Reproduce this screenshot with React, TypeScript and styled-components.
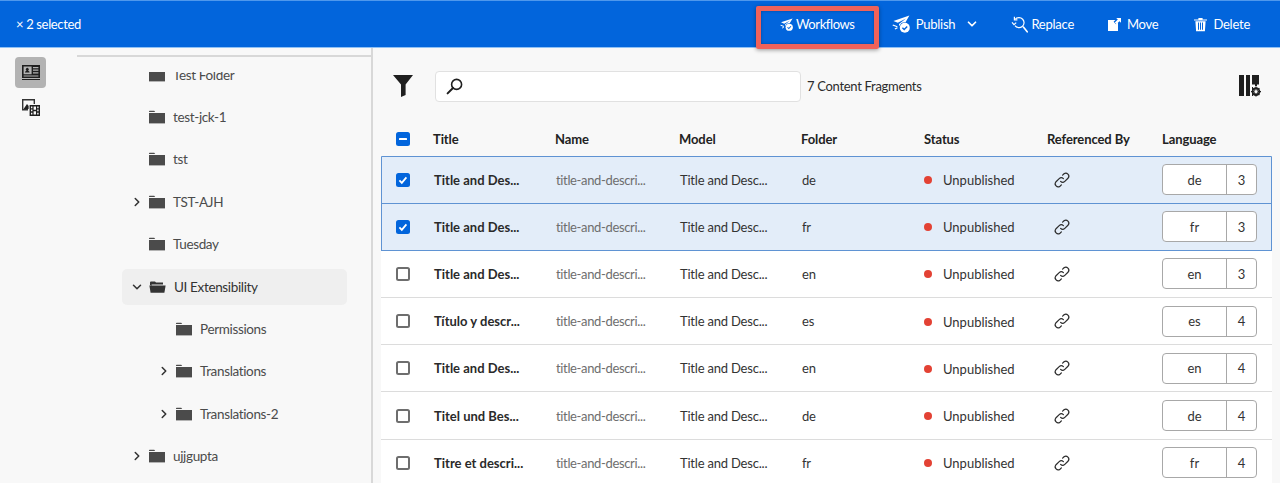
import React from "react";
import styled, { createGlobalStyle } from "styled-components";
import { ChevronDown, ChevronRight } from "lucide-react";

const FONT = `"Lato", "Noto Sans", "Liberation Sans", sans-serif`;

const GlobalStyle = createGlobalStyle`
  html, body {
    margin: 0;
    padding: 0;
    height: 483px;
    overflow: hidden;
    background: #f8f8f8;
    font-family: ${FONT};
    color: #2c2c2c;
  }
  * { box-sizing: border-box; }
`;

const Page = styled.div`
  width: 1280px;
  height: 483px;
  display: flex;
  flex-direction: column;
  overflow: hidden;
`;

/* top action bar */
const ActionBar = styled.div`
  flex: 0 0 48px;
  display: flex;
  align-items: center;
  padding: 0 30px 0 16px;
  background: #0265dc;
  border-top: 1px solid #4f98ec;
  border-bottom: 1px solid #8fc1f5;
  color: #fff;
  font-size: 13px;
  letter-spacing: -0.25px;
`;

const SelectedCount = styled.div`
  margin-right: auto;
  font-size: 13px;
  letter-spacing: -0.35px;
`;

const ActionButton = styled.div<{ $left?: number; $gap?: number }>`
  display: flex;
  align-items: center;
  gap: ${(p) => p.$gap ?? 5}px;
  margin-left: ${(p) => p.$left ?? 0}px;
  white-space: nowrap;
`;

const WorkflowsButton = styled(ActionButton)`
  position: relative;
  width: 123px;
  height: 46px;
  justify-content: center;
  gap: 3px;
  letter-spacing: -0.4px;
`;

const Highlight = styled.div`
  position: absolute;
  inset: 5px 0 -2px 0;
  border: 5px solid #f0625a;
  border-radius: 2px;
  box-shadow: 0 1px 4px rgba(0, 0, 0, 0.4), inset 0 0 3px rgba(0, 0, 0, 0.3);
`;

const PublishCaret = styled.span`
  display: flex;
  margin-left: 4px;
`;

const Body = styled.div`
  flex: 1;
  display: flex;
  min-height: 0;
`;

/* icon rail */
const Rail = styled.div`
  flex: 0 0 77px;
  display: flex;
  flex-direction: column;
  align-items: flex-start;
  padding: 9px 0 0 15px;
  gap: 3px;
`;

const RailButton = styled.div<{ $active?: boolean }>`
  width: 31px;
  height: 31px;
  display: flex;
  align-items: center;
  justify-content: center;
  border-radius: 4px;
  background: ${(p) => (p.$active ? "#b3b3b3" : "transparent")};
`;

/* folder tree */
const TreePane = styled.div`
  flex: 0 0 296px;
  display: flex;
  flex-direction: column;
  border-right: 2px solid #d8d8d8;
  padding-top: 7px;
`;

const TreeRule = styled.div`
  flex: 0 0 2px;
  background: #d8d8d8;
  margin-bottom: 15px;
`;

const TreeViewport = styled.div`
  flex: 1;
  min-height: 0;
  overflow: hidden;
`;

const TreeList = styled.div`
  margin-top: -18.5px;
  display: flex;
  flex-direction: column;
`;

const TreeRow = styled.div<{ $level: number; $open?: boolean }>`
  position: relative;
  height: 42.4px;
  display: flex;
  align-items: center;
  margin: ${(p) => (p.$open ? "0 24px 0 45px" : "0")};
  padding-left: ${(p) => (p.$open ? 8 : 72 + p.$level * 27)}px;
  font-size: 13.5px;
  letter-spacing: -0.35px;
  color: ${(p) => (p.$open ? "#333" : "#4b4b4b")};
  ${(p) =>
    p.$open
      ? `&::before {
           content: "";
           position: absolute;
           inset: 4px 0 3px 0;
           background: #efefef;
           border-radius: 5px;
         }
         & > * { position: relative; }`
      : ""}
`;

const Chevron = styled.span<{ $open?: boolean }>`
  flex: 0 0 14px;
  width: 14px;
  height: 14px;
  display: flex;
  align-items: center;
  justify-content: center;
  margin-left: ${(p) => (p.$open ? 0 : -19)}px;
  margin-right: 5px;
  color: #333;
`;

const FolderLabel = styled.span`
  margin-left: 8px;
`;

/* content pane */
const Main = styled.div`
  flex: 1;
  min-width: 0;
  display: flex;
  flex-direction: column;
  padding: 0 8px 0 8px;
`;

const SearchRow = styled.div`
  flex: 0 0 64px;
  display: flex;
  align-items: center;
  padding: 12px 11px 0 12px;
`;

const SearchBox = styled.div`
  width: 366px;
  height: 31px;
  margin-left: 22px;
  padding-left: 10px;
  display: flex;
  align-items: center;
  background: #fff;
  border: 1px solid #e1e1e1;
  border-radius: 4px;
`;

const ResultCount = styled.div`
  margin-left: 6px;
  margin-right: auto;
  font-size: 13px;
  letter-spacing: -0.3px;
  color: #2c2c2c;
`;

const Cols = `52px 122px 124px 122px 123px 123px 115px 1fr`;

const HeaderRow = styled.div`
  flex: 0 0 44.5px;
  display: grid;
  grid-template-columns: ${Cols};
  align-items: center;
  padding-top: 9px;
  font-size: 13px;
  font-weight: 700;
  letter-spacing: -0.1px;
  color: #222;
  & > :first-child {
    padding-left: 15px;
  }
`;

const Row = styled.div<{ $selected?: boolean }>`
  flex: 0 0 47.2px;
  height: 47.2px;
  display: grid;
  grid-template-columns: ${Cols};
  align-items: center;
  font-size: 13px;
  background: ${(p) => (p.$selected ? "#e3edf9" : "#fff")};
  border-bottom: 1px solid ${(p) => (p.$selected ? "#5f93d3" : "#dcdcdc")};
  ${(p) => (p.$selected ? "box-shadow: inset 1px 0 0 #5f93d3, inset -1px 0 0 #5f93d3;" : "")}
`;

const RowFirstBorder = styled.div`
  border-top: 1px solid #5f93d3;
  margin-top: -1px;
  border-radius: 3px 3px 0 0;
`;

const CheckCell = styled.div`
  padding-left: 15px;
  display: flex;
  align-items: center;
`;

const CheckBox = styled.div<{ $on?: boolean }>`
  width: 14px;
  height: 14px;
  border-radius: 2.5px;
  display: flex;
  align-items: center;
  justify-content: center;
  background: ${(p) => (p.$on ? "#0265dc" : "#fff")};
  border: ${(p) => (p.$on ? "none" : "2px solid #6e6e6e")};
`;

const TitleCell = styled.div`
  font-weight: 700;
  color: #2a2a2a;
  padding-left: 1px;
`;

const NameCell = styled.div`
  color: #6e6e6e;
  padding-left: 1px;
  letter-spacing: -0.35px;
`;

const PlainCell = styled.div`
  color: #333;
  padding-left: 1px;
  letter-spacing: -0.2px;
`;

const StatusCell = styled.div`
  display: flex;
  align-items: center;
  gap: 11px;
  color: #333;
  padding-top: 1px;
`;

const StatusDot = styled.span`
  width: 8px;
  height: 8px;
  border-radius: 50%;
  background: #e34234;
`;

const LinkCell = styled.div`
  padding-left: 6px;
  display: flex;
  align-items: center;
`;

const LangPill = styled.div`
  width: 95px;
  height: 31px;
  display: grid;
  grid-template-columns: 63px 1fr;
  background: #fff;
  border: 1px solid #a8a8a8;
  border-radius: 4px;
  font-size: 13px;
  color: #333;
`;

const LangPart = styled.div<{ $divider?: boolean }>`
  display: flex;
  align-items: center;
  justify-content: center;
  ${(p) => (p.$divider ? "border-left: 1px solid #a8a8a8;" : "")}
`;

/* drawn icons */
const PlaneCheck = ({ size }: { size: number }) => (
  <svg width={size} height={size} viewBox="0 0 18 18" fill="#fff">
    <path d="M17.4.6 1.4 6l4.4 1.8L14 3.4 7 9l.2 2.6a6 6 0 0 1 6.2-4.2z" />
    <path d="M1 9.4l4.6 1.8-.5 1.1-4.6-1.8zM2.6 13.4l2.6-1.1.5 1-2.6 1.2z" />
    <circle cx="12.8" cy="12.8" r="5" />
    <path d="m10.4 12.8 1.8 1.8 3-3.2" fill="none" stroke="#0265dc" strokeWidth="1.4" />
  </svg>
);

const ReplaceIcon = () => (
  <svg width="17" height="17" viewBox="0 0 17 17" fill="none" stroke="#fff" strokeWidth="1.2">
    <path d="M4.4 3.2A5 5 0 1 1 4 9.6" />
    <path d="M3.4.8v3h3M1 6.4l2 2.2 2.2-2" />
    <path d="M12.4 11l3.8 4.8" strokeWidth="1.6" strokeLinecap="round" />
  </svg>
);

const MoveIcon = () => (
  <svg width="15" height="15" viewBox="0 0 15 15" fill="#fff">
    <path d="M1 3h7.4L6.6 4.8 9 7.2l2-2V14H1z" />
    <path d="M9.2 1H14v4.8l-1.6-1.6-3 3-1.6-1.6 3-3z" />
  </svg>
);

const TrashIcon = () => (
  <svg width="13" height="15" viewBox="0 0 13 15" fill="#fff">
    <path d="M0 2.4h13v1.2H0zM4.4 1h4.2v1.6H4.4z" />
    <path d="M1.4 4.2h10.2l-.7 10H2.1zM4 5.6v7.2h1V5.6zm2 0v7.2h1V5.6zm2 0v7.2h1V5.6z" fillRule="evenodd" />
  </svg>
);

const FolderIcon = ({ open }: { open?: boolean }) =>
  open ? (
    <svg width="17" height="14" viewBox="0 0 17 14" fill="#333">
      <path d="M1 2.4A1 1 0 0 1 2 1.4h4l1 1.2h7v2H2.6V6L1 5z" />
      <path d="M.4 5.6h16.2l-1.2 7.2H1.6z" />
    </svg>
  ) : (
    <svg width="16" height="14" viewBox="0 0 16 14" fill="#4b4b4b">
      <path d="M0 1.4A.6.6 0 0 1 .6.8h4.6l1 1.2H0z" />
      <path d="M0 3h16v10.4H0z" />
    </svg>
  );

const ProfileIcon = () => (
  <svg width="18" height="15" viewBox="0 0 18 15" fill="#1f1f1f">
    <path
      d="M0 0h18v13H0zM1.6 1.6v7.6h8V1.6zM11 2v1.2h5.4V2zm0 2.6v1.2h5.4V4.6zm0 2.6v1.2h5.4V7.2zM1.6 10.4v1.2h14.8v-1.2z"
      fillRule="evenodd"
    />
    <path d="M3 7.6c0-1.2 1-1.4 1.6-1.8a1.5 1.5 0 1 1 1.4 0c.6.4 1.6.6 1.6 1.8z" />
    <path d="M0 14h18v1H0z" />
  </svg>
);

const MediaIcon = () => (
  <svg width="18" height="18" viewBox="0 0 18 18" fill="#1f1f1f">
    <path d="M0 1h13v5h-1.4V2.4H1.4V11H6v1.4H0z" fill="#333" />
    <path d="M1.6 11 5 6 6.6 8v3z" />
    <path
      d="M7.6 7h10.4v11H7.6zM9 8.6v1.6h1.4V8.6zm6.2 0v1.6h1.4V8.6zM9 11.6v1.6h1.4v-1.6zm6.2 0v1.6h1.4v-1.6zM9 14.8v1.6h1.4v-1.6zm6.2 0v1.6h1.4v-1.6zM11.6 8.6v3.2h2.4V8.6zm0 4.6v3.2h2.4v-3.2z"
      fillRule="evenodd"
    />
  </svg>
);

const FilterIcon = () => (
  <svg width="20" height="22" viewBox="0 0 20 22" fill="#1f1f1f">
    <path d="M0 0h20L12.6 9.4v10.6L8 22V9.4z" />
  </svg>
);

const SearchIcon = () => (
  <svg width="17" height="17" viewBox="0 0 17 17" fill="none" stroke="#1f1f1f">
    <circle cx="10.6" cy="6.4" r="5" strokeWidth="1.6" />
    <path d="M7 10 1.6 15.4" strokeWidth="2" strokeLinecap="round" />
  </svg>
);

const ColumnsIcon = () => (
  <svg width="22" height="22" viewBox="0 0 22 22" fill="#1f1f1f">
    <path d="M0 0h5v21H0zM7 0h4v21H7zM13 0h7v9.6h-2V11h-2V9.6h-3z" />
    <path d="M13 12h1v9h-1z" />
    <circle cx="17" cy="16.6" r="3.4" fill="none" stroke="#1f1f1f" strokeWidth="1.8" />
    <path d="M17 11.6v10M12 16.6h10M13.6 13.2l6.8 6.8M20.4 13.2l-6.8 6.8" stroke="#1f1f1f" strokeWidth="1.2" />
    <circle cx="17" cy="16.6" r="1.6" fill="#f8f8f8" />
  </svg>
);

const LinkIcon = () => (
  <svg width="18" height="18" viewBox="0 0 18 18" fill="none" stroke="#2c2c2c" strokeWidth="1.2">
    <path d="M7.6 10.4a3 3 0 0 0 4.2 0l3.4-3.4a3 3 0 0 0-4.2-4.2L9.6 4.2" strokeLinecap="round" />
    <path d="M10.4 7.6a3 3 0 0 0-4.2 0L2.8 11a3 3 0 0 0 4.2 4.2l1.4-1.4" strokeLinecap="round" />
  </svg>
);

const TickMark = () => (
  <svg width="10" height="10" viewBox="0 0 10 10" fill="none" stroke="#fff" strokeWidth="1.8">
    <path d="m1.4 5.4 2.4 2.4 4.6-5.4" />
  </svg>
);

const DashMark = () => (
  <svg width="8" height="2" viewBox="0 0 8 2" fill="#fff">
    <rect width="8" height="2" rx="0.6" />
  </svg>
);

const folders: { label: string; level: number; chevron?: "right" | "down"; open?: boolean }[] = [
  { label: "Test Folder", level: 0 },
  { label: "test-jck-1", level: 0 },
  { label: "tst", level: 0 },
  { label: "TST-AJH", level: 0, chevron: "right" },
  { label: "Tuesday", level: 0 },
  { label: "UI Extensibility", level: 0, chevron: "down", open: true },
  { label: "Permissions", level: 1 },
  { label: "Translations", level: 1, chevron: "right" },
  { label: "Translations-2", level: 1, chevron: "right" },
  { label: "ujjgupta", level: 0, chevron: "right" },
];

const fragments = [
  { title: "Title and Des...", folder: "de", lang: "de", count: 3, selected: true },
  { title: "Title and Des...", folder: "fr", lang: "fr", count: 3, selected: true },
  { title: "Title and Des...", folder: "en", lang: "en", count: 3 },
  { title: "Título y descr...", folder: "es", lang: "es", count: 4 },
  { title: "Title and Des...", folder: "en", lang: "en", count: 4 },
  { title: "Titel und Bes...", folder: "de", lang: "de", count: 4 },
  { title: "Titre et descri...", folder: "fr", lang: "fr", count: 4 },
];

const App: React.FC = () => (
  <Page>
    <GlobalStyle />
    <ActionBar>
      <SelectedCount>× 2 selected</SelectedCount>
      <WorkflowsButton>
        <PlaneCheck size={13} />
        Workflows
        <Highlight />
      </WorkflowsButton>
      <ActionButton $left={13} $gap={6}>
        <PlaneCheck size={18} />
        Publish
        <PublishCaret>
          <ChevronDown size={14} strokeWidth={3} />
        </PublishCaret>
      </ActionButton>
      <ActionButton $left={32} $gap={3}>
        <ReplaceIcon />
        Replace
      </ActionButton>
      <ActionButton $left={33}>
        <MoveIcon />
        Move
      </ActionButton>
      <ActionButton $left={36} $gap={6}>
        <TrashIcon />
        Delete
      </ActionButton>
    </ActionBar>
    <Body>
      <Rail>
        <RailButton $active>
          <ProfileIcon />
        </RailButton>
        <RailButton>
          <MediaIcon />
        </RailButton>
      </Rail>
      <TreePane>
        <TreeRule />
        <TreeViewport>
          <TreeList>
            {folders.map((f) => (
              <TreeRow key={f.label} $level={f.level} $open={f.open}>
                {f.chevron && (
                  <Chevron $open={f.open}>
                    {f.chevron === "down" ? (
                      <ChevronDown size={14} strokeWidth={2.6} />
                    ) : (
                      <ChevronRight size={14} strokeWidth={2.6} />
                    )}
                  </Chevron>
                )}
                <FolderIcon open={f.open} />
                <FolderLabel>{f.label}</FolderLabel>
              </TreeRow>
            ))}
          </TreeList>
        </TreeViewport>
      </TreePane>
      <Main>
        <SearchRow>
          <FilterIcon />
          <SearchBox>
            <SearchIcon />
          </SearchBox>
          <ResultCount>7 Content Fragments</ResultCount>
          <ColumnsIcon />
        </SearchRow>
        <HeaderRow>
          <div>
            <CheckBox $on>
              <DashMark />
            </CheckBox>
          </div>
          <div>Title</div>
          <div>Name</div>
          <div>Model</div>
          <div>Folder</div>
          <div>Status</div>
          <div>Referenced By</div>
          <div>Language</div>
        </HeaderRow>
        <RowFirstBorder />
        {fragments.map((r, i) => (
          <Row key={i} $selected={r.selected}>
            <CheckCell>
              <CheckBox $on={r.selected}>{r.selected && <TickMark />}</CheckBox>
            </CheckCell>
            <TitleCell>{r.title}</TitleCell>
            <NameCell>title-and-descri...</NameCell>
            <PlainCell>Title and Desc...</PlainCell>
            <PlainCell>{r.folder}</PlainCell>
            <StatusCell>
              <StatusDot />
              Unpublished
            </StatusCell>
            <LinkCell>
              <LinkIcon />
            </LinkCell>
            <LangPill>
              <LangPart>{r.lang}</LangPart>
              <LangPart $divider>{r.count}</LangPart>
            </LangPill>
          </Row>
        ))}
      </Main>
    </Body>
  </Page>
);

export default App;
